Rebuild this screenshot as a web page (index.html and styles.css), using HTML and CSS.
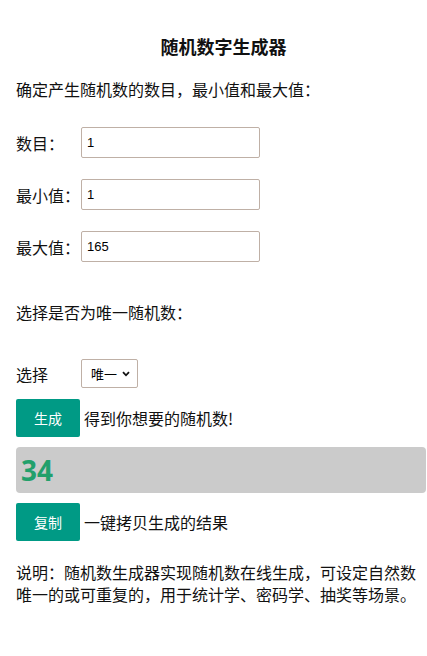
FILE: index.html
```html
<!DOCTYPE html>
<html lang="zh-CN">
<head>
<meta charset="utf-8">
<title>随机数字生成器</title>
<link rel="stylesheet" href="styles.css">
</head>
<body>
<div class="page">
  <h1 class="title">随机数字生成器</h1>
  <p class="intro">确定产生随机数的数目，最小值和最大值：</p>
  <div class="field">
    <label class="label">数目：</label>
    <input class="input" type="text" value="1">
  </div>
  <div class="field">
    <label class="label">最小值：</label>
    <input class="input" type="text" value="1">
  </div>
  <div class="field">
    <label class="label">最大值：</label>
    <input class="input" type="text" value="165">
  </div>
  <p class="intro intro-unique">选择是否为唯一随机数：</p>
  <div class="field field-select">
    <label class="label">选择</label>
    <div class="select-wrap">
      <select class="select">
        <option>唯一</option>
        <option>可重复</option>
      </select>
      <svg class="chevron" width="8" height="6" viewBox="0 0 8 6"><path d="M1 1.2 L4 4.3 L7 1.2" fill="none" stroke="#111" stroke-width="1.8"/></svg>
    </div>
  </div>
  <div class="action action-gen">
    <button class="btn">生成</button>
    <span class="action-text">得到你想要的随机数!</span>
  </div>
  <div class="result">34</div>
  <div class="action action-copy">
    <button class="btn">复制</button>
    <span class="action-text">一键拷贝生成的结果</span>
  </div>
  <p class="desc">说明：随机数生成器实现随机数在线生成，可设定自然数唯一的或可重复的，用于统计学、密码学、抽奖等场景。</p>
</div>
</body>
</html>
```
FILE: styles.css
```css
html, body {
  margin: 0;
  padding: 0;
  background: #fff;
}
body {
  font-family: "Noto Sans CJK SC", "Noto Sans", sans-serif;
  color: #111;
  font-size: 16px;
}
.page {
  padding: 0 1px 0 16px;
}
.title {
  margin: 33px 0 0 0;
  font-size: 18px;
  line-height: 26px;
  font-weight: bold;
  text-align: center;
  padding-left: 5px;
}
.intro {
  margin: 18px 0 0 0;
  line-height: 24px;
}
.field {
  display: flex;
  align-items: center;
  margin-top: 21px;
}
.intro + .field {
  margin-top: 26px;
}
.label {
  width: 65px;
  flex: none;
  line-height: 24px;
}
.input {
  box-sizing: border-box;
  width: 179px;
  height: 31px;
  border: 1px solid #bfb0a6;
  border-radius: 2px;
  padding: 0 5px;
  font-family: "Liberation Sans", Arial, sans-serif;
  font-size: 13px;
  color: #000;
  background: #fff;
  outline: none;
}
.intro-unique {
  margin-top: 38px;
}
.field.field-select {
  margin-top: 35px;
}
.select-wrap {
  position: relative;
  width: 57px;
  height: 29px;
}
.select {
  appearance: none;
  -webkit-appearance: none;
  box-sizing: border-box;
  width: 57px;
  height: 29px;
  border: 1px solid #bfb0a6;
  border-radius: 2px;
  background: #fff;
  padding: 0 0 0 9px;
  font-family: "Noto Sans CJK SC", sans-serif;
  font-size: 13px;
  color: #000;
  outline: none;
}
.chevron {
  position: absolute;
  right: 8px;
  top: 12px;
  pointer-events: none;
}
.action {
  display: flex;
  align-items: center;
  gap: 4px;
}
.action-gen {
  margin-top: 11px;
}
.action-copy {
  margin-top: 10px;
}
.btn {
  width: 64px;
  height: 38px;
  border: none;
  border-radius: 2px;
  background: #009a85;
  color: #fff;
  font-family: "Noto Sans CJK SC", sans-serif;
  font-size: 14px;
  padding: 0;
  flex: none;
}
.action-text {
  line-height: 24px;
}
.result {
  margin-top: 10px;
  height: 46px;
  background: #cbcbcb;
  border-radius: 4px;
  padding-left: 5px;
  font-family: "Open Sans", "Noto Sans", sans-serif;
  font-weight: bold;
  font-size: 28px;
  line-height: 46px;
  color: #22a06b;
}
.desc {
  margin: 20px 0 0 0;
  line-height: 22px;
}
```
